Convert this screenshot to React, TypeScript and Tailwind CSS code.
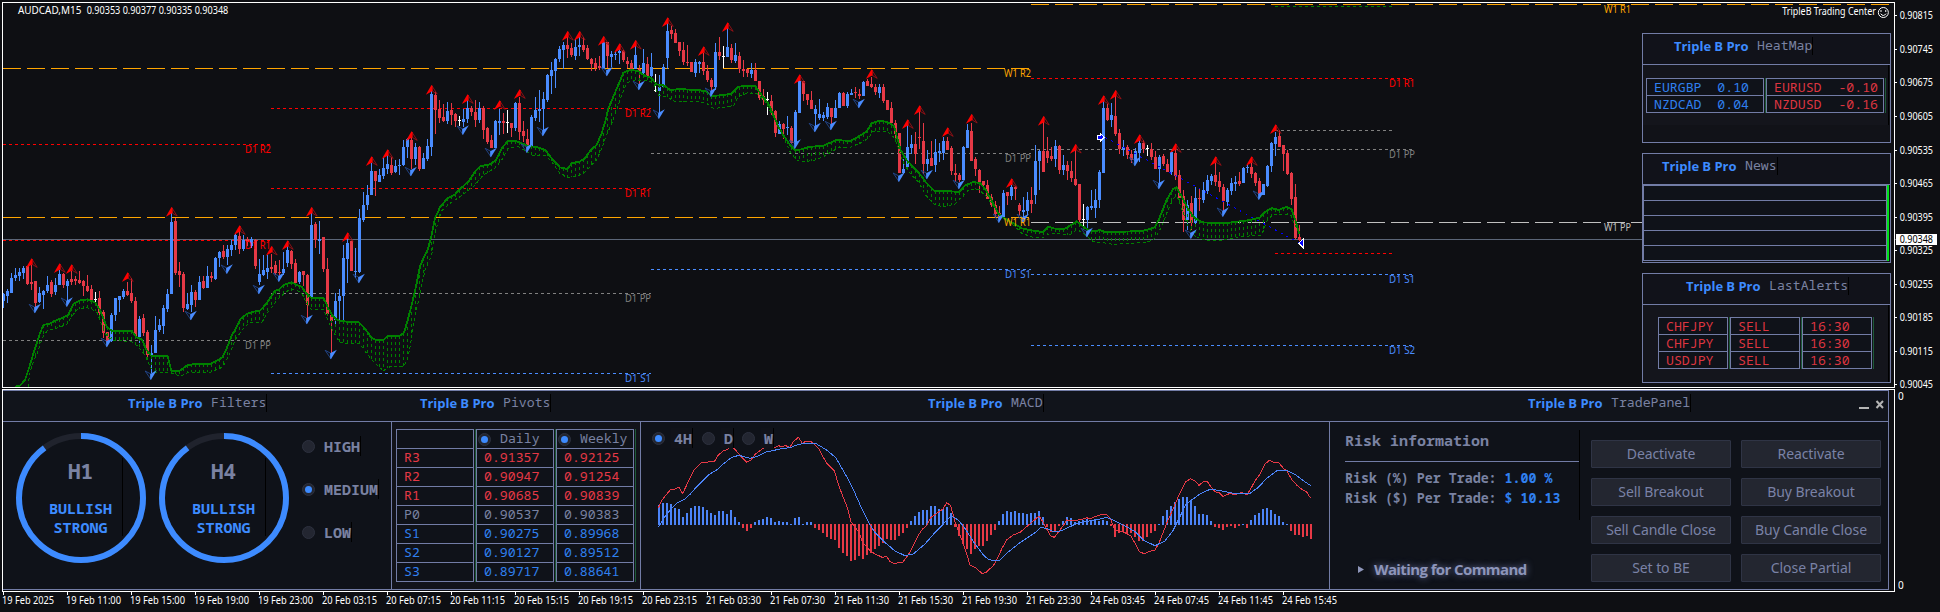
import { ReactNode } from "react";

// Chart geometry is stored in thirds of a pixel, one candle every 12 units.
// Each candle: direction, high, body top, body bottom, low
const candleData = `
u 878 881 903 923,u 866 874 887 908,u 819 834 878 878,u 804 825 834 843,u 804 816 827 843,u 798 804 818 837,d 798 798 852 855,d 795 845 852 870,d 843 843 909 925,u 861 879 906 909,
u 870 873 885 926,u 828 855 874 879,d 840 846 881 890,u 834 855 876 885,u 810 822 856 856,d 820 822 855 864,u 836 843 857 905,d 812 837 846 855,d 828 837 843 855,d 813 840 849 852,
d 840 843 858 888,d 825 858 872 875,d 855 866 899 905,n 876 897 900 908,d 873 894 940 960,d 930 936 999 1015,d 996 996 1025 1025,u 940 945 1022 1026,u 894 894 945 962,u 888 888 900 936,
u 867 873 891 897,d 845 873 885 888,d 835 879 903 909,d 890 903 1007 1010,u 948 957 1010 1028,d 942 954 999 1008,d 990 996 1065 1080,u 1035 1058 1066 1120,u 948 990 1058 1060,u 957 975 990 996,
u 915 924 977 1002,u 867 882 927 936,u 638 666 881 881,d 655 663 819 825,d 786 813 825 861,d 816 822 923 936,u 879 912 926 930,u 855 876 914 935,d 870 876 899 921,u 828 846 899 899,
d 828 843 864 867,u 798 828 864 864,d 816 828 834 846,u 771 774 837 840,u 753 756 774 801,d 735 753 771 777,u 735 747 771 795,u 720 735 750 768,u 702 705 735 750,d 690 708 747 762,
u 705 720 746 753,d 710 717 725 738,u 711 717 738 745,d 717 720 797 807,u 777 822 846 855,u 765 810 825 827,u 765 804 816 837,d 762 801 807 819,d 783 795 818 825,d 780 816 820 825,
u 756 807 818 825,u 738 750 789 801,d 750 753 792 806,d 777 789 849 852,u 812 816 846 852,d 813 813 825 858,d 822 825 915 957,u 640 675 893 893,d 666 672 720 744,u 663 717 723 762,
d 711 711 807 816,d 774 807 942 945,d 945 945 963 1060,u 879 903 960 975,u 867 887 903 960,u 735 774 888 960,u 715 729 777 849,d 723 723 813 813,u 744 813 816 834,u 627 654 816 820,
u 576 615 660 666,u 555 585 615 630,u 488 513 585 585,d 513 513 543 588,u 507 525 546 546,u 474 504 528 537,u 465 492 507 522,d 470 495 519 524,u 480 498 516 519,u 477 495 498 525,
u 420 441 495 498,u 415 418 441 474,d 410 420 477 507,u 429 441 477 495,d 438 441 507 512,u 459 474 506 506,u 417 438 477 483,u 272 282 441 468,d 276 285 330 402,d 300 327 354 369,
d 312 351 363 366,u 306 333 363 372,d 309 330 345 375,d 339 342 363 381,n 348 360 363 378,u 327 357 366 380,u 300 324 357 369,d 318 324 336 348,d 300 336 360 381,u 306 324 360 369,
d 318 324 389 417,d 381 384 426 432,d 405 420 443 443,u 360 363 444 444,u 327 363 368 405,d 339 364 369 402,n 330 366 369 399,d 369 369 383 411,u 306 309 384 393,d 290 309 396 420,
d 363 393 408 426,d 387 417 438 441,u 345 351 441 441,u 291 330 354 363,u 270 327 333 366,u 276 297 327 390,u 222 225 300 306,u 186 210 228 282,u 174 177 213 264,u 138 147 177 186,
u 126 135 150 207,d 110 135 147 174,d 129 144 165 171,u 117 141 168 180,u 110 135 141 168,d 111 135 150 156,d 135 144 177 180,d 174 177 192 213,d 174 189 204 213,d 168 198 204 210,
u 118 126 206 206,d 126 126 168 205,u 153 162 171 201,u 153 162 165 180,u 147 153 159 192,d 150 153 180 186,d 171 183 192 204,d 180 189 210 210,u 135 165 207 207,d 195 207 213 255,
u 147 189 219 222,d 171 192 228 228,u 159 201 228 231,n 222 270 273 276,u 225 261 273 345,u 192 201 261 261,u 68 93 174 207,d 78 90 102 117,d 87 99 129 129,d 126 126 153 168,
d 126 150 186 195,d 135 186 189 198,d 186 186 216 216,u 177 186 219 231,u 183 186 191 219,d 160 186 213 225,d 195 213 240 246,d 234 240 261 276,u 129 156 261 270,d 111 156 168 180,
n 138 168 171 204,u 85 141 171 171,d 132 144 180 189,u 129 165 183 189,d 156 168 207 219,d 180 207 213 231,d 208 208 219 231,u 189 210 222 234,d 189 210 243 243,d 243 243 294 300,
d 267 288 300 315,n 276 297 300 345,d 285 303 333 345,d 330 333 399 411,u 363 372 402 402,d 369 372 387 417,u 348 381 385 405,d 378 384 429 432,u 330 336 432 432,u 240 243 339 339,
d 243 243 282 303,d 282 282 300 315,d 273 300 327 327,u 315 327 342 378,u 297 342 354 360,u 336 345 354 363,u 309 321 350 357,d 324 324 352 375,u 300 324 354 354,u 276 279 324 324,
d 276 279 318 318,u 276 282 318 324,u 267 279 285 285,d 261 276 279 294,d 267 282 288 297,u 243 246 288 288,d 237 243 258 258,d 230 252 261 264,d 252 261 276 285,u 252 261 279 294,
d 252 261 303 309,d 300 300 330 330,d 306 324 369 369,d 360 369 402 414,d 399 399 518 518,u 477 507 519 522,u 375 441 501 510,u 405 432 444 462,d 396 432 462 492,d 333 411 414 447,
d 369 423 492 522,u 450 477 492 513,d 423 474 498 498,u 417 456 495 516,u 429 453 459 486,u 411 423 459 480,d 410 423 450 450,d 438 444 513 525,d 492 519 525 546,d 519 525 540 546,
u 438 441 540 540,u 372 390 444 444,d 370 393 483 483,d 471 477 507 528,d 507 510 546 579,d 543 543 555 558,d 540 555 597 597,d 582 591 615 621,d 603 615 642 654,d 618 639 654 654,
u 570 579 654 654,d 576 576 588 615,u 555 561 588 600,d 558 561 567 600,d 609 615 633 645,u 591 630 636 660,u 576 600 633 645,d 561 600 612 639,u 435 483 585 612,u 450 453 483 570,
d 365 453 516 516,d 411 453 474 489,d 441 468 477 483,u 420 438 477 501,d 435 438 510 522,u 465 495 510 525,d 483 495 513 540,d 483 513 534 546,d 450 537 555 558,d 552 552 660 672,
n 612 657 660 678,u 618 621 660 700,u 570 618 624 630,u 567 600 624 654,u 510 516 600 624,u 303 324 519 519,d 312 324 360 363,u 309 345 360 381,d 288 348 402 408,d 387 399 447 462,
u 420 441 450 468,d 435 441 465 477,d 450 462 480 489,u 444 453 483 490,u 420 429 459 486,d 420 429 447 459,n 435 444 447 468,d 429 447 471 480,d 453 471 507 507,u 465 471 507 550,
d 462 468 492 498,d 477 492 516 516,u 453 456 516 525,d 450 459 528 540,d 510 525 594 594,d 570 588 660 696,u 600 615 660 690,d 588 609 669 690,u 561 594 669 681,d 564 594 597 633,
u 546 570 600 609,u 525 540 573 582,u 522 528 543 555,d 490 525 546 558,d 516 543 561 576,d 552 561 603 636,u 564 570 606 618,u 534 549 573 585,u 528 546 552 573,d 516 543 552 558,
u 501 504 549 549,u 495 501 504 519,d 490 501 522 534,d 516 519 549 558,d 534 543 585 588,u 552 552 585 585,u 495 498 558 561,u 426 429 498 516,u 395 411 432 468,d 390 408 441 441,
d 435 435 462 513,d 450 459 522 525,d 516 519 597 615,d 552 591 714 717,d 675 711 720 722`;

const candles = candleData
  .trim()
  .split(/,\s*/)
  .map((row) => {
    const [dir, ...levels] = row.split(" ");
    return { dir, levels: levels.map((v) => Math.round(Number(v) / 3) * 3) };
  });

// [candle index, tip y]
const upArrows = [
  [7, 775], [14, 790], [17, 793], [31, 817], [42, 621], [59, 676], [67, 738], [71, 721], [77, 621], [86, 697],
  [92, 469], [96, 448], [102, 394], [107, 255], [116, 283], [124, 301], [129, 268], [141, 93], [144, 93], [150, 108],
  [154, 130], [158, 120], [166, 52], [175, 139], [181, 67], [199, 223], [217, 208], [226, 358], [229, 316], [236, 382],
  [242, 342], [252, 535], [260, 348], [268, 432], [275, 286], [278, 270], [284, 403], [293, 430], [303, 469], [312, 469],
  [318, 373],
];

const downArrows = [
  [8, 940], [16, 921], [26, 1042], [37, 1140], [47, 961], [56, 822], [64, 883], [69, 846], [76, 973], [82, 1078],
  [89, 850], [102, 529], [115, 405], [122, 472], [131, 459], [135, 409], [151, 229], [159, 271], [164, 357], [177, 291],
  [198, 447], [203, 397], [207, 391], [214, 325], [224, 546], [231, 538], [239, 568], [249, 669], [255, 670], [271, 712],
  [283, 499], [289, 568], [297, 717], [305, 651], [314, 600],
];

const average = [
  45, 1160, 60, 1157, 75, 1140, 90, 1095, 105, 1045, 118, 1005, 130, 975, 150, 971, 165, 962, 185, 955, 205, 945, 220, 912,
  240, 901, 262, 898, 285, 907, 300, 930, 320, 980, 335, 992, 395, 992, 410, 1012, 425, 1018, 440, 1050, 455, 1069, 503, 1069,
  514, 1112, 540, 1112, 560, 1097, 580, 1092, 632, 1092, 650, 1082, 668, 1072, 680, 1045, 695, 1008, 710, 980, 722, 957,
  740, 942, 760, 935, 780, 932, 800, 910, 825, 872, 838, 868, 850, 855, 875, 847, 890, 855, 905, 860, 920, 882, 934, 893,
  970, 893, 985, 925, 998, 948, 1015, 961, 1040, 965, 1075, 966, 1095, 986, 1115, 1014, 1130, 1020, 1150, 1020, 1162, 1008,
  1200, 1007, 1212, 998, 1222, 965, 1235, 915, 1248, 860, 1260, 800, 1270, 775, 1283, 750, 1295, 705, 1305, 655, 1320, 622,
  1342, 595, 1365, 583, 1380, 567, 1405, 545, 1425, 515, 1442, 498, 1470, 493, 1488, 480, 1505, 445, 1523, 424, 1550, 424,
  1570, 432, 1585, 438, 1610, 441, 1635, 449, 1655, 475, 1680, 502, 1702, 507, 1715, 490, 1740, 484, 1755, 475, 1772, 450,
  1790, 435, 1805, 400, 1817, 360, 1825, 325, 1840, 290, 1857, 250, 1870, 218, 1890, 210, 1915, 213, 1935, 228, 1952, 233,
  1970, 253, 1992, 256, 2010, 270, 2040, 267, 2100, 271, 2120, 275, 2135, 288, 2160, 286, 2192, 282, 2215, 261, 2235, 257,
  2265, 258, 2285, 285, 2305, 310, 2320, 345, 2335, 380, 2350, 405, 2370, 435, 2385, 450, 2400, 449, 2425, 441, 2470, 437,
  2510, 420, 2550, 423, 2575, 410, 2600, 395, 2615, 370, 2638, 362, 2662, 366, 2682, 378, 2692, 415, 2702, 450, 2720, 480,
  2740, 502, 2762, 525, 2780, 550, 2805, 574, 2840, 573, 2878, 576, 2895, 556, 2920, 546, 2940, 549, 2960, 573, 2980, 612,
  2998, 645, 3025, 662, 3045, 672, 3065, 685, 3100, 692, 3130, 696, 3143, 680, 3165, 686, 3195, 686, 3215, 674, 3230, 664,
  3250, 680, 3265, 690, 3285, 694, 3300, 690, 3315, 696, 3375, 695, 3430, 692, 3465, 682, 3480, 650, 3500, 600, 3520, 566,
  3530, 562, 3545, 590, 3560, 620, 3580, 650, 3605, 667, 3670, 670, 3720, 664, 3750, 660, 3780, 652, 3795, 636, 3815, 624,
  3835, 630, 3860, 620, 3875, 628, 3886, 660, 3898, 702,
];

const lowerBand = [
  85, 1160, 88, 1125, 100, 1085, 110, 1065, 118, 1040, 133, 1000, 150, 990, 175, 983, 200, 973, 215, 950, 230, 930, 262, 923,
  290, 935, 300, 960, 315, 1000, 335, 1020, 395, 1025, 415, 1040, 435, 1065, 450, 1100, 465, 1117, 503, 1117, 520, 1120,
  540, 1130, 565, 1117, 630, 1117, 660, 1105, 675, 1090, 690, 1060, 705, 1020, 730, 985, 750, 968, 785, 968, 805, 935,
  835, 895, 865, 872, 885, 868, 905, 880, 920, 910, 934, 928, 970, 928, 990, 975, 1000, 995, 1020, 1028, 1080, 1032,
  1100, 1060, 1125, 1090, 1150, 1112, 1170, 1100, 1210, 1100, 1222, 1080, 1232, 1030, 1245, 950, 1260, 880, 1275, 810,
  1295, 765, 1307, 690, 1325, 632, 1350, 610, 1380, 590, 1420, 560, 1450, 525, 1485, 505, 1505, 480, 1525, 445, 1555, 440,
  1580, 455, 1595, 465, 1635, 466, 1655, 485, 1680, 520, 1700, 532, 1725, 530, 1750, 522, 1770, 500, 1790, 480, 1805, 445,
  1820, 405, 1835, 370, 1850, 330, 1865, 285, 1880, 250, 1900, 240, 1935, 240, 1960, 248, 1975, 285, 2000, 290, 2025, 305,
  2100, 305, 2120, 310, 2140, 325, 2180, 322, 2200, 318, 2215, 290, 2240, 280, 2270, 280, 2295, 305, 2320, 350, 2350, 410,
  2370, 455, 2390, 480, 2410, 486, 2445, 480, 2470, 470, 2515, 443, 2550, 442, 2580, 430, 2605, 415, 2620, 393, 2660, 393,
  2680, 410, 2690, 430, 2710, 490, 2730, 520, 2755, 545, 2780, 590, 2805, 615, 2830, 620, 2865, 612, 2890, 588, 2910, 567,
  2935, 567, 2960, 590, 2985, 625, 3010, 655, 3040, 675, 3065, 700, 3100, 712, 3130, 712, 3150, 700, 3210, 704, 3230, 690,
  3250, 700, 3280, 725, 3310, 728, 3340, 733, 3375, 730, 3440, 728, 3465, 715, 3485, 680, 3500, 640, 3520, 595, 3532, 590,
  3550, 640, 3565, 680, 3585, 710, 3620, 722, 3670, 720, 3720, 710, 3785, 705, 3800, 665, 3820, 642, 3870, 642, 3882, 670,
  3898, 702,
];

function valueAt(line: number[], x: number) {
  for (let i = 2; i < line.length; i += 2) {
    if (x <= line[i]) {
      const t = (x - line[i - 2]) / (line[i] - line[i - 2]);
      return line[i - 1] + t * (line[i + 1] - line[i - 1]);
    }
  }
  return line[line.length - 1];
}

const RED = "#ff0000";
const GRAY = "#808080";
const ORANGE = "#ffa500";
const BLUE = "#4a8cff";

// x1, x2, y, colour, dash, gap
const levels: [number, number, number, string, number, number][] = [
  [9, 3087, 205.5, ORANGE, 54, 18],
  [9, 3087, 652.5, ORANGE, 54, 18],
  [3093, 5682, 13.5, ORANGE, 54, 18],
  [3093, 4926, 667.5, "#c0c0c0", 54, 18],
  [9, 813, 433.5, RED, 9, 9],
  [9, 813, 721.5, RED, 9, 9],
  [9, 813, 1021.5, GRAY, 9, 9],
  [813, 1953, 325.5, RED, 9, 9],
  [813, 1953, 565.5, RED, 9, 9],
  [813, 1953, 880.5, GRAY, 9, 9],
  [813, 1953, 1120.5, BLUE, 9, 9],
  [1953, 3093, 460.5, GRAY, 9, 9],
  [1953, 3093, 808.5, BLUE, 9, 9],
  [3093, 4236, 235.5, RED, 9, 9],
  [3093, 4236, 448.5, GRAY, 9, 9],
  [3093, 4236, 823.5, BLUE, 9, 9],
  [3093, 4236, 1036.5, BLUE, 9, 9],
  [3825, 4176, 19.5, "#008000", 9, 9],
  [3825, 4176, 391.5, GRAY, 9, 9],
  [3825, 4176, 760.5, RED, 9, 9],
];

const labels: [string, number, number, string][] = [
  ["D1 R2", 813, 459, RED],
  ["D1 R1", 813, 747, RED],
  ["D1 PP", 813, 1047, GRAY],
  ["D1 R2", 1953, 351, RED],
  ["D1 R1", 1953, 591, RED],
  ["D1 PP", 1953, 906, GRAY],
  ["D1 S1", 1953, 1146, BLUE],
  ["W1 R2", 3093, 231, ORANGE],
  ["D1 PP", 3093, 486, GRAY],
  ["W1 R1", 3093, 678, ORANGE],
  ["D1 S1", 3093, 834, BLUE],
  ["D1 R1", 4245, 261, RED],
  ["D1 PP", 4245, 474, GRAY],
  ["D1 S1", 4245, 849, BLUE],
  ["D1 S2", 4245, 1062, BLUE],
  ["W1 R1", 4893, 39, ORANGE],
  ["W1 PP", 4893, 693, "#c0c0c0"],
];

const prices: [string, number][] = [
  ["0.90815", 46.5],
  ["0.90745", 148.5],
  ["0.90675", 247.5],
  ["0.90605", 349.5],
  ["0.90535", 451.5],
  ["0.90465", 550.5],
  ["0.90395", 652.5],
  ["0.90325", 751.5],
  ["0.90255", 853.5],
  ["0.90185", 952.5],
  ["0.90115", 1054.5],
  ["0.90045", 1153.5],
];

const times = [
  "19 Feb 2025", "19 Feb 11:00", "19 Feb 15:00", "19 Feb 19:00", "19 Feb 23:00", "20 Feb 03:15", "20 Feb 07:15",
  "20 Feb 11:15", "20 Feb 15:15", "20 Feb 19:15", "20 Feb 23:15", "21 Feb 03:30", "21 Feb 07:30", "21 Feb 11:30",
  "21 Feb 15:30", "21 Feb 19:30", "21 Feb 23:30", "24 Feb 03:45", "24 Feb 07:45", "24 Feb 11:45", "24 Feb 15:45",
];

const candleColor: Record<string, string> = { u: "#4a8cff", d: "#e63946", n: "#ffffff" };

const PriceChart = () => {
  return (
    <svg
      className="col-start-1 row-start-1 h-[388px] w-[1940px] overflow-visible font-['Noto_Sans',sans-serif]"
      viewBox="0 0 5820 1164"
      shapeRendering="crispEdges"
      fontSize={31}
    >
      <path d="M4926 718.5H9" stroke="#5b6678" strokeWidth={3} />
      <path d="M5682 718.5H5694" stroke="#5b6678" strokeWidth={3} />
      {levels.map(([x1, x2, y, color, dash, gap], idx) => (
        <line key={idx} x1={x1} x2={x2} y1={y} y2={y} stroke={color} strokeWidth={3} strokeDasharray={`${dash} ${gap}`} />
      ))}
      {candles.map(({ dir, levels: [high, top, bottom, low] }, idx) => (
        <g key={idx} fill={candleColor[dir]}>
          <rect x={12 * idx + 9} y={high} width={3} height={Math.max(low - high, 3)} />
          <rect x={12 * idx + 6} y={top} width={9} height={Math.max(bottom - top, 3)} />
        </g>
      ))}

      <g stroke="#008000" fill="none">
        <polyline points={average.join(" ")} strokeWidth={5.5} />
        <polyline points={lowerBand.join(" ")} strokeWidth={3} strokeDasharray="9 8" />
        {candles.map((_, idx) => {
          const x = 12 * idx + 10.5;
          if (x < 85) return null;
          return (
            <line key={idx} x1={x} x2={x} y1={valueAt(average, x)} y2={valueAt(lowerBand, x)} strokeWidth={3} strokeDasharray="9 9" />
          );
        })}
      </g>

      {upArrows.map(([idx, y]) => (
        <g key={idx} transform={`translate(${12 * idx + 10.5} ${y})`} shapeRendering="auto">
          <path d="M1 2L17 27L2 18Z" fill="none" stroke="#a01015" strokeWidth={2.6} />
          <path d="M0 0L3 3V18L-17 29Z" fill="#ff0000" />
        </g>
      ))}
      {downArrows.map(([idx, y]) => (
        <g key={idx} transform={`translate(${12 * idx + 8.5} ${y})`} shapeRendering="auto">
          <path d="M0 -2L-17 -27L0 -18Z" fill="none" stroke="#234a96" strokeWidth={2.6} />
          <path d="M0 0L-2 -3V-18L18 -29Z" fill="#4a8cff" />
        </g>
      ))}

      <path d="M3315 412L3900 730" stroke="#0000ff" strokeWidth={3} strokeDasharray="6 14" />
      <path d="M3293 406H3300V400L3313 412L3300 425V418H3293Z" fill="#0000ff" stroke="#fff" strokeWidth={3} />
      <path d="M3910 717V743L3896 730Z" fill="#0000ff" stroke="#fff" strokeWidth={3} />

      {labels.map(([text, x, y, color], idx) => (
        <text
          key={idx}
          x={x - (text[0] === "W" ? 81 : 78)}
          y={y}
          fill={color}
          textLength={text[0] === "W" ? 81 : 78}
          lengthAdjust="spacingAndGlyphs"
        >
          {text}
        </text>
      ))}

      <g fill="#ffffff">
        <text x={54} y={42} textLength={190} lengthAdjust="spacingAndGlyphs">AUDCAD,M15</text>
        <text x={260} y={42} textLength={425} lengthAdjust="spacingAndGlyphs">0.90353 0.90377 0.90335 0.90348</text>
        <text x={5347} y={45} textLength={281} lengthAdjust="spacingAndGlyphs">TripleB Trading Center</text>
      </g>
      <g fill="none" stroke="#fff" strokeWidth={3} shapeRendering="auto">
        <circle cx={5650} cy={37.5} r={15} />
        <path d="M5642 41Q5650 52 5658 41" />
        <path d="M5643 31V35M5657 31V35" strokeWidth={4} />
      </g>

      <rect x={7.5} y={7.5} width={5676} height={1155} fill="none" stroke="#fff" strokeWidth={3} />
      {prices.map(([price, y]) => (
        <g key={price} fill="#ffffff">
          <rect x={5685} y={y - 1.5} width={6} height={3} />
          <text x={5699} y={y + 10.5} textLength={100} lengthAdjust="spacingAndGlyphs">{price}</text>
        </g>
      ))}
      <rect x={5688} y={702} width={123} height={33} fill="#ffffff" />
      <text x={5699} y={729} fill="#000" textLength={100} lengthAdjust="spacingAndGlyphs">0.90348</text>
    </svg>
  );
};

const PanelTitle = ({ name, className }: { name: string; className?: string }) => (
  <div className={`flex h-4 items-center gap-2 ${className}`}>
    <span className="w-[75px] whitespace-nowrap pb-px font-['Open_Sans',sans-serif] text-[13px] leading-4 font-bold tracking-[-0.04px] text-[#3d8bff]">
      Triple B Pro
    </span>
    <span className="border-r border-black pb-[2px] text-[13.2px] leading-4">{name}</span>
  </div>
);

const Widget = ({ name, titleClass, children }: { name: string; titleClass: string; children: ReactNode }) => (
  <div className="h-[110px] w-[249px] border border-[#727ca6] bg-[#111218]">
    <div className="h-[31px] border-b border-[#727ca6] bg-[#11121a] pt-1">
      <PanelTitle name={name} className={titleClass} />
    </div>
    {children}
  </div>
);

const HeatMap = () => {
  const columns = [
    { color: "text-[#3080f0]", pad: "pr-[14px]", rows: [["EURGBP", "0.10"], ["NZDCAD", "0.04"]] },
    { color: "text-[#dc3540]", pad: "pr-[5px]", rows: [["EURUSD", "-0.10"], ["NZDUSD", "-0.16"]] },
  ];
  return (
    <Widget name="HeatMap" titleClass="pl-[31px]">
      <div className="mr-px flex h-[60px] border-r border-black bg-[#14151c] pt-[13px] pl-[3px]">
        {columns.map((column, idx) => (
          <div key={idx} className={`h-[35px] w-[120px] border-r border-[#1d5a38] pr-px ${column.color}`}>
            <div className="border border-[#727ca6] bg-[#0f1219]">
              {column.rows.map(([pair, value], i) => (
                <div
                  key={pair}
                  className={`flex justify-between pl-[7px] text-[13.2px] leading-4 ${column.pad} ${i ? "h-4" : "h-[17px] border-b border-[#727ca6]"}`}
                >
                  <span>{pair}</span>
                  <span>{value}</span>
                </div>
              ))}
            </div>
          </div>
        ))}
      </div>
    </Widget>
  );
};

const News = () => (
  <Widget name="News" titleClass="pl-[19px]">
    <div className="mr-px h-[76px] border-r-2 border-[#00e01a]">
      <div className="h-[76px] border border-[#727ca6] bg-[#0f1219]">
        {[1, 2, 3, 4, 5].map((row) => (
          <div key={row} className="h-[15px] border-b border-[#727ca6] last:h-[14px] last:border-b-0" />
        ))}
      </div>
    </div>
  </Widget>
);

const LastAlerts = () => {
  const columns = [
    ["CHFJPY", "CHFJPY", "USDJPY"],
    ["SELL", "SELL", "SELL"],
    ["16:30", "16:30", "16:30"],
  ];
  return (
    <Widget name="LastAlerts" titleClass="pl-[43px]">
      <div className="mr-px flex h-[77px] border-r border-black bg-[#14151c] pt-3 pl-[15px] text-[#dc3540]">
        {columns.map((rows, idx) => (
          <div key={idx} className="h-[52px] w-[72px] border-r border-[#1d5a38] pr-px">
            <div className="border border-b-0 border-[#727ca6] bg-[#0f1219]">
              {rows.map((text, i) => (
                <div key={i} className="h-[17px] border-b border-[#727ca6] pl-[7px] text-[13.2px] leading-[17px]">
                  {text}
                </div>
              ))}
            </div>
          </div>
        ))}
      </div>
    </Widget>
  );
};

const Radio = ({ checked }: { checked?: boolean }) => (
  <span className="flex size-[13px] shrink-0 items-center justify-center rounded-full border border-[#2d313f] bg-[#232631]">
    {checked && <span className="size-[7px] rounded-full bg-[#3d8bff]" />}
  </span>
);

const Gauge = ({ label }: { label: string }) => (
  <div className="grid size-[130px]">
    <svg className="col-start-1 row-start-1" viewBox="0 0 130 130">
      <circle cx="65" cy="65" r="62" fill="none" stroke="#20232d" strokeWidth="6" />
      <circle
        cx="65"
        cy="65"
        r="62"
        fill="none"
        stroke="#3d8bff"
        strokeWidth="6"
        pathLength="100"
        strokeDasharray="90 10"
        transform="rotate(-90 65 65)"
      />
    </svg>
    <div className="col-start-1 row-start-1 mt-[25px] mr-[23px] h-[78px] border-r border-black pl-[23px] text-center font-bold">
      <p className="text-[21px] leading-[26px]">{label}</p>
      <p className="mt-[15px] text-[15px] leading-[19px] text-[#3d8bff]">BULLISH</p>
      <p className="text-[15px] leading-[19px] text-[#3d8bff]">STRONG</p>
    </div>
  </div>
);

const Filters = () => (
  <div className="flex w-[388px] pl-[13px]">
    <div className="flex gap-[13px] pt-[11px]">
      <Gauge label="H1" />
      <Gauge label="H4" />
    </div>
    <div className="flex flex-col gap-[23px] pt-[14px] pl-[13px] text-[15px] leading-5 font-bold">
      {["HIGH", "MEDIUM", "LOW"].map((level) => (
        <div key={level} className="flex items-center gap-[9px]">
          <Radio checked={level === "MEDIUM"} />
          <span className="border-r border-black">{level}</span>
        </div>
      ))}
    </div>
  </div>
);

const Pivots = () => {
  const columns = [
    ["", "R3", "R2", "R1", "P0", "S1", "S2", "S3"],
    ["Daily", "0.91357", "0.90947", "0.90685", "0.90537", "0.90275", "0.90127", "0.89717"],
    ["Weekly", "0.92125", "0.91254", "0.90839", "0.90383", "0.89968", "0.89512", "0.88641"],
  ];
  const rowColor = (row: number) => {
    if (row === 0 || row === 4) return "text-[#7a82a2]";
    return row < 4 ? "text-[#e63946]" : "text-[#3080f0]";
  };
  return (
    <div className="flex w-[249px] border-l border-[#727ca6] bg-[#12131a] pt-[7px] pl-1">
      {columns.map((rows, idx) => (
        <div key={idx} className="h-[153px] w-20 border-r border-[#1d5a38] pr-px">
          <div className="border border-b-0 border-[#727ca6] bg-[#0f1219]">
            {rows.map((text, i) => (
              <div
                key={i}
                className={`flex h-[19px] items-center border-b border-[#727ca6] text-[13.2px] leading-4 ${rowColor(i)} ${i || !idx ? "pl-[7px]" : "gap-[9px] pl-px"}`}
              >
                {i === 0 && idx > 0 && <Radio checked />}
                <span className="pb-[2px]">{text}</span>
              </div>
            ))}
          </div>
        </div>
      ))}
    </div>
  );
};

// Histogram ends, measured from the zero line at 434
const histogram = [
  375, 369, 369, 372, 384, 387, 411, 399, 384, 378, 378, 381, 390, 399, 405, 393, 393, 402, 390, 411, 426, 443, 452, 443,
  426, 420, 417, 411, 414, 426, 423, 426, 426, 432, 414, 411, 432, 426, 426, 443, 450, 459, 471, 477, 480, 503, 519, 528,
  543, 540, 528, 537, 525, 518, 506, 498, 489, 477, 480, 480, 468, 459, 443, 423, 408, 396, 390, 390, 378, 378, 387, 387,
  381, 399, 440, 467, 491, 507, 521, 508, 498, 498, 483, 465, 450, 423, 402, 393, 396, 393, 399, 399, 402, 399, 399, 393,
  411, 440, 455, 455, 437, 423, 411, 414, 426, 423, 420, 417, 423, 420, 423, 420, 423, 437, 471, 459, 456, 460, 459, 471,
  483, 483, 471, 459, 453, 432, 408, 390, 378, 366, 357, 351, 351, 360, 378, 402, 402, 405, 423, 440, 444, 450, 441, 437,
  443, 437, 432, 443, 420, 405, 399, 387, 384, 390, 402, 408, 426, 432, 453, 465, 465, 471, 468, 477,
];

const macdLine = [
  55, 384, 66, 360, 78, 345, 92, 328, 104, 328, 116, 321, 128, 341, 140, 315, 152, 290, 162, 270, 186, 247, 223, 245, 235, 225,
  250, 213, 262, 209, 272, 195, 283, 206, 300, 226, 320, 247, 333, 240, 345, 223, 368, 206, 385, 196, 403, 203, 415, 197,
  425, 200, 437, 197, 450, 202, 460, 185, 475, 172, 487, 190, 497, 184, 513, 184, 537, 207, 550, 232, 562, 252, 583, 272,
  595, 313, 607, 345, 622, 383, 633, 425, 657, 458, 668, 487, 690, 512, 705, 522, 727, 532, 740, 529, 750, 545, 764, 552,
  775, 547, 788, 547, 803, 527, 815, 507, 835, 465, 848, 447, 860, 437, 872, 413, 893, 398, 908, 388, 920, 368, 932, 377,
  945, 425, 965, 478, 978, 515, 990, 555, 1005, 562, 1026, 580, 1037, 578, 1060, 557, 1070, 540, 1087, 503, 1100, 480,
  1120, 465, 1140, 457, 1160, 440, 1175, 427, 1197, 408, 1208, 425, 1220, 447, 1232, 468, 1243, 472, 1258, 452, 1270, 437,
  1280, 420, 1300, 423, 1325, 418, 1340, 413, 1350, 417, 1365, 410, 1385, 403, 1402, 405, 1413, 420, 1425, 452, 1440, 453,
  1455, 458, 1473, 468, 1485, 490, 1498, 515, 1512, 521, 1530, 514, 1545, 510, 1558, 487, 1580, 430, 1600, 385, 1617, 345,
  1637, 305, 1652, 296, 1665, 303, 1677, 316, 1690, 305, 1702, 305, 1715, 323, 1725, 335, 1737, 338, 1749, 349, 1770, 340,
  1783, 345, 1805, 337, 1821, 345, 1833, 325, 1845, 303, 1858, 285, 1875, 252, 1888, 241, 1902, 247, 1916, 247, 1930, 265,
  1940, 272, 1955, 298, 1970, 315, 1988, 330, 2000, 336, 2012, 355,
];

const signalLine = [
  55, 440, 66, 425, 78, 405, 95, 385, 110, 370, 135, 357, 150, 343, 170, 320, 205, 285, 230, 270, 250, 252, 275, 232, 297, 226,
  330, 235, 355, 228, 375, 217, 420, 207, 450, 203, 475, 193, 505, 189, 530, 192, 560, 210, 587, 233, 600, 255, 620, 290,
  645, 340, 665, 385, 687, 430, 705, 457, 730, 483, 765, 513, 795, 527, 820, 522, 855, 492, 880, 463, 905, 438, 925, 415,
  937, 410, 955, 420, 975, 445, 1000, 485, 1030, 525, 1045, 538, 1065, 543, 1080, 540, 1100, 520, 1140, 488, 1160, 475,
  1185, 458, 1202, 443, 1220, 445, 1243, 456, 1265, 452, 1305, 433, 1335, 425, 1375, 418, 1400, 412, 1420, 420, 1460, 440,
  1485, 455, 1512, 482, 1530, 490, 1545, 497, 1575, 483, 1600, 450, 1620, 410, 1637, 375, 1655, 360, 1680, 342, 1712, 327,
  1740, 332, 1780, 340, 1830, 340, 1855, 322, 1880, 295, 1912, 271, 1940, 271, 1965, 283, 1990, 302, 2012, 317,
];

const Macd = () => (
  <div className="relative w-[689px] border-l border-[#727ca6]">
    <svg className="h-[167px] w-[688px]" viewBox="3 126 2064 501" shapeRendering="crispEdges">
      {histogram.map((end, idx) => {
        const up = end < 434;
        return (
          <rect
            key={idx}
            x={54 + 12 * idx}
            y={up ? end : 432}
            width={6}
            height={up ? 435 - end : end - 432}
            fill={up ? "#4c84f8" : "#e63946"}
          />
        );
      })}
      <g fill="none" strokeWidth={3}>
        <polyline points={macdLine.join(" ")} stroke="#e63946" />
        <polyline points={signalLine.join(" ")} stroke="#4c84f8" />
      </g>
    </svg>
    <div className="absolute top-[6px] left-[11px] flex text-[15px] leading-5 font-bold">
      {["4H", "D", "W"].map((frame) => (
        <div key={frame} className={`flex items-center gap-[6px] ${frame === "4H" ? "w-[50px]" : "w-10"}`}>
          <Radio checked={frame === "4H"} />
          <span className="border-r border-black bg-[#11131a] pl-[3px]">{frame}</span>
        </div>
      ))}
    </div>
  </div>
);

const TradePanel = () => {
  const buttons = [
    "Deactivate",
    "Reactivate",
    "Sell Breakout",
    "Buy Breakout",
    "Sell Candle Close",
    "Buy Candle Close",
    "Set to BE",
    "Close Partial",
  ];
  return (
    <div className="flex grow border-l border-[#727ca6]">
      <div className="w-[250px] pt-2 pl-[15px]">
        <div className="h-[90px] border-r border-black">
          <h2 className="h-8 border-b border-[#727ca6] text-[15px] leading-5 font-bold">Risk information</h2>
          <div className="pt-[6px] text-[13.3px] leading-5 font-bold">
            <p>
              Risk (%) Per Trade: <span className="text-[#3080f0]">1.00 %</span>
            </p>
            <p>
              Risk ($) Per Trade: <span className="text-[#3080f0]">$ 10.13</span>
            </p>
          </div>
        </div>
        <div className="mt-[39px] flex items-center gap-[10px] pl-[13px]">
          <svg className="h-[7px] w-[6px]" viewBox="0 0 6 7">
            <path d="M0 0L6 3.5L0 7Z" fill="#8f97bb" />
          </svg>
          <span className="font-['Open_Sans',sans-serif] text-[15px] leading-5 font-bold tracking-[-0.6px] whitespace-nowrap text-[#8d95ba] [text-shadow:0_0_7px_#666f9c]">
            Waiting for Command
          </span>
        </div>
      </div>
      <div className="grid grid-cols-[140px_140px] content-start gap-[10px] pt-[18px] pl-[11px]">
        {buttons.map((label) => (
          <button
            key={label}
            className="h-7 rounded-[1px] border border-[#2f3445] bg-[#232630] font-['Noto_Sans',sans-serif] text-[14px] leading-none tracking-[-0.08px] text-[#7a82a6]"
          >
            {label}
          </button>
        ))}
      </div>
    </div>
  );
};

const Dashboard = () => (
  <div className="ml-[2px] h-[203px] w-[1893px] border border-white">
    <div className="h-[200px] w-[1886px] border-y border-r border-[#727ca6] bg-[#0f1219]">
      <div className="flex h-[31px] border-b border-[#727ca6] bg-[#11141b] pt-1">
        <PanelTitle name="Filters" className="w-[388px] pl-[125px]" />
        <PanelTitle name="Pivots" className="w-[249px] pl-[29px]" />
        <PanelTitle name="MACD" className="w-[689px] pl-[288px]" />
        <PanelTitle name="TradePanel" className="grow pl-[199px]" />
        <svg className="mt-1 mr-[3px] h-3 w-[27px]" viewBox="0 0 27 12" stroke="#b5b5b5" strokeWidth="2">
          <path d="M1 9H11M18.5 2L25 9M25 2L18.5 9" />
        </svg>
      </div>
      <div className="flex h-[167px]">
        <Filters />
        <Pivots />
        <Macd />
        <TradePanel />
      </div>
    </div>
  </div>
);

const TimeAxis = () => (
  <svg
    className="h-5 w-[1940px] font-['Noto_Sans',sans-serif]"
    viewBox="0 0 1940 20"
    fill="#ffffff"
    fontSize={10.3}
    shapeRendering="crispEdges"
  >
    {times.map((time, idx) => (
      <g key={time}>
        <rect x={3 + 64 * idx} y={0} width={1} height={3} />
        <text x={2 + 64 * idx} y={12} textLength={idx ? 55 : 52} lengthAdjust="spacingAndGlyphs">
          {time}
        </text>
      </g>
    ))}
  </svg>
);

export default function App() {
  return (
    <div className="h-[612px] w-[1940px] overflow-hidden bg-[#0e0f13] font-['Noto_Sans_Mono','DejaVu_Sans_Mono',monospace] text-[#7a82a2]">
      <div className="grid h-[389px]">
        <PriceChart />
        <div className="col-start-1 row-start-1 mt-[33px] ml-[1642px] flex flex-col gap-[10px]">
          <HeatMap />
          <News />
          <LastAlerts />
        </div>
      </div>
      <div className="flex">
        <Dashboard />
        <div className="flex flex-col justify-between py-[1px] pl-[3px] font-['Noto_Sans',sans-serif] text-[10px] leading-3 text-white">
          <span>0</span>
          <span>0</span>
        </div>
      </div>
      <TimeAxis />
    </div>
  );
}
